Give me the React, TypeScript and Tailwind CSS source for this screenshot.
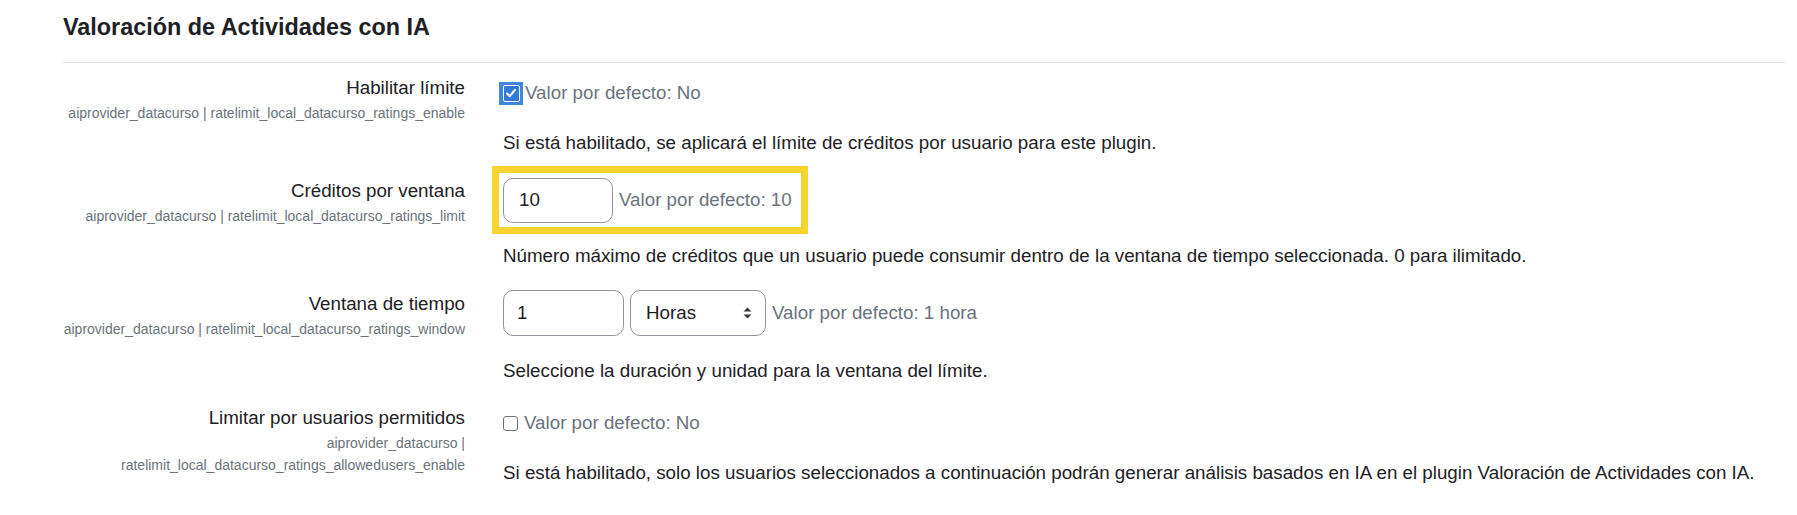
import React from "react";

const font = { fontFamily: '"Liberation Sans", Arial, sans-serif' };

function Label({ title, short }: { title: string; short: React.ReactNode }) {
  return (
    <div className="w-[402px] shrink-0 text-right">
      <div className="text-[18.75px] leading-[28px] text-[#1d2125]">{title}</div>
      <div className="text-[14px] leading-[22px] text-[#6a737b]">{short}</div>
    </div>
  );
}

function SelectArrows() {
  return (
    <svg width="9" height="12" viewBox="0 0 9 12">
      <path d="M4.5 0.5 L8.5 4.5 L0.5 4.5 Z" fill="#343a40" />
      <path d="M4.5 11.5 L8.5 7.5 L0.5 7.5 Z" fill="#343a40" />
    </svg>
  );
}

export default function App() {
  return (
    <div className="w-[1797px] h-[515px] bg-white pl-[63px] pr-[12px]" style={font}>
      <h3 className="pt-[13px] h-[41px] text-[23.4px] leading-[28px] font-bold text-[#1d2125]">
        Valoración de Actividades con IA
      </h3>
      <div className="mt-[21px] h-px bg-[#dee2e6]" />

      {/* Row 1 */}
      <div className="flex gap-[38px] pt-[11px]">
        <Label title="Habilitar límite" short="aiprovider_datacurso | ratelimit_local_datacurso_ratings_enable" />
        <div className="flex-1">
          <div className="pt-[5px]">
            <div className="h-[28px] flex items-center -ml-[4px]">
              <span className="w-[24px] h-[23px] bg-[#3d88dc] flex items-center justify-center">
                <span className="w-[17px] h-[17px] border border-white bg-[#2f7bd6] rounded-[2px] flex items-center justify-center">
                  <svg width="12" height="12" viewBox="0 0 12 12">
                    <path d="M2 6.5 L4.8 9.2 L10 2.8" stroke="white" strokeWidth="2" fill="none" strokeLinecap="round" strokeLinejoin="round" />
                  </svg>
                </span>
              </span>
              <span className="ml-[2px] text-[18.75px] text-[#6a737b]">Valor por defecto: No</span>
            </div>
          </div>
          <div className="mt-[22px] text-[18.75px] leading-[28px] text-[#1d2125]">
            Si está habilitado, se aplicará el límite de créditos por usuario para este plugin.
          </div>
        </div>
      </div>

      {/* Row 2 */}
      <div className="flex gap-[38px] mt-[20px]">
        <Label title="Créditos por ventana" short="aiprovider_datacurso | ratelimit_local_datacurso_ratings_limit" />
        <div className="flex-1 -mt-[11px]">
          <div className="-ml-[11px] w-[316px] h-[68px] border-[7px] border-[#f8d430] flex items-center pl-[4px]">
            <div className="w-[110px] h-[45px] border border-[#8f959e] rounded-[10px] flex items-center pl-[15px] text-[18.75px] text-[#1d2125]">
              10
            </div>
            <span className="ml-[6px] text-[18.75px] text-[#6a737b]">Valor por defecto: 10</span>
          </div>
          <div className="mt-[8px] text-[18.75px] leading-[28px] text-[#1d2125]">
            Número máximo de créditos que un usuario puede consumir dentro de la ventana de tiempo seleccionada. 0 para ilimitado.
          </div>
        </div>
      </div>

      {/* Row 3 */}
      <div className="flex gap-[38px] mt-[20px]">
        <Label title="Ventana de tiempo" short="aiprovider_datacurso | ratelimit_local_datacurso_ratings_window" />
        <div className="flex-1">
          <div className="flex items-center">
            <div className="w-[121px] h-[46px] border border-[#8f959e] rounded-[10px] flex items-center pl-[13px] text-[18.75px] text-[#1d2125]">
              1
            </div>
            <div className="ml-[6px] w-[136px] h-[46px] border border-[#8f959e] rounded-[10px] flex items-center justify-between pl-[15px] pr-[13px] text-[18.75px] text-[#1d2125]">
              <span>Horas</span>
              <SelectArrows />
            </div>
            <span className="ml-[6px] text-[18.75px] text-[#6a737b]">Valor por defecto: 1 hora</span>
          </div>
          <div className="mt-[21px] text-[18.75px] leading-[28px] text-[#1d2125]">
            Seleccione la duración y unidad para la ventana del límite.
          </div>
        </div>
      </div>

      {/* Row 4 */}
      <div className="flex gap-[38px] mt-[19px]">
        <Label
          title="Limitar por usuarios permitidos"
          short={
            <>
              aiprovider_datacurso |<br />
              ratelimit_local_datacurso_ratings_allowedusers_enable
            </>
          }
        />
        <div className="flex-1">
          <div className="pt-[5px]">
            <div className="h-[28px] flex items-center">
              <span className="w-[15px] h-[15px] border border-[#6a737b] rounded-[3px] bg-white" />
              <span className="ml-[6px] text-[18.75px] text-[#6a737b]">Valor por defecto: No</span>
            </div>
          </div>
          <div className="mt-[22px] text-[18.75px] leading-[28px] text-[#1d2125]">
            Si está habilitado, solo los usuarios seleccionados a continuación podrán generar análisis basados en IA en el plugin Valoración de Actividades con IA.
          </div>
        </div>
      </div>
    </div>
  );
}
